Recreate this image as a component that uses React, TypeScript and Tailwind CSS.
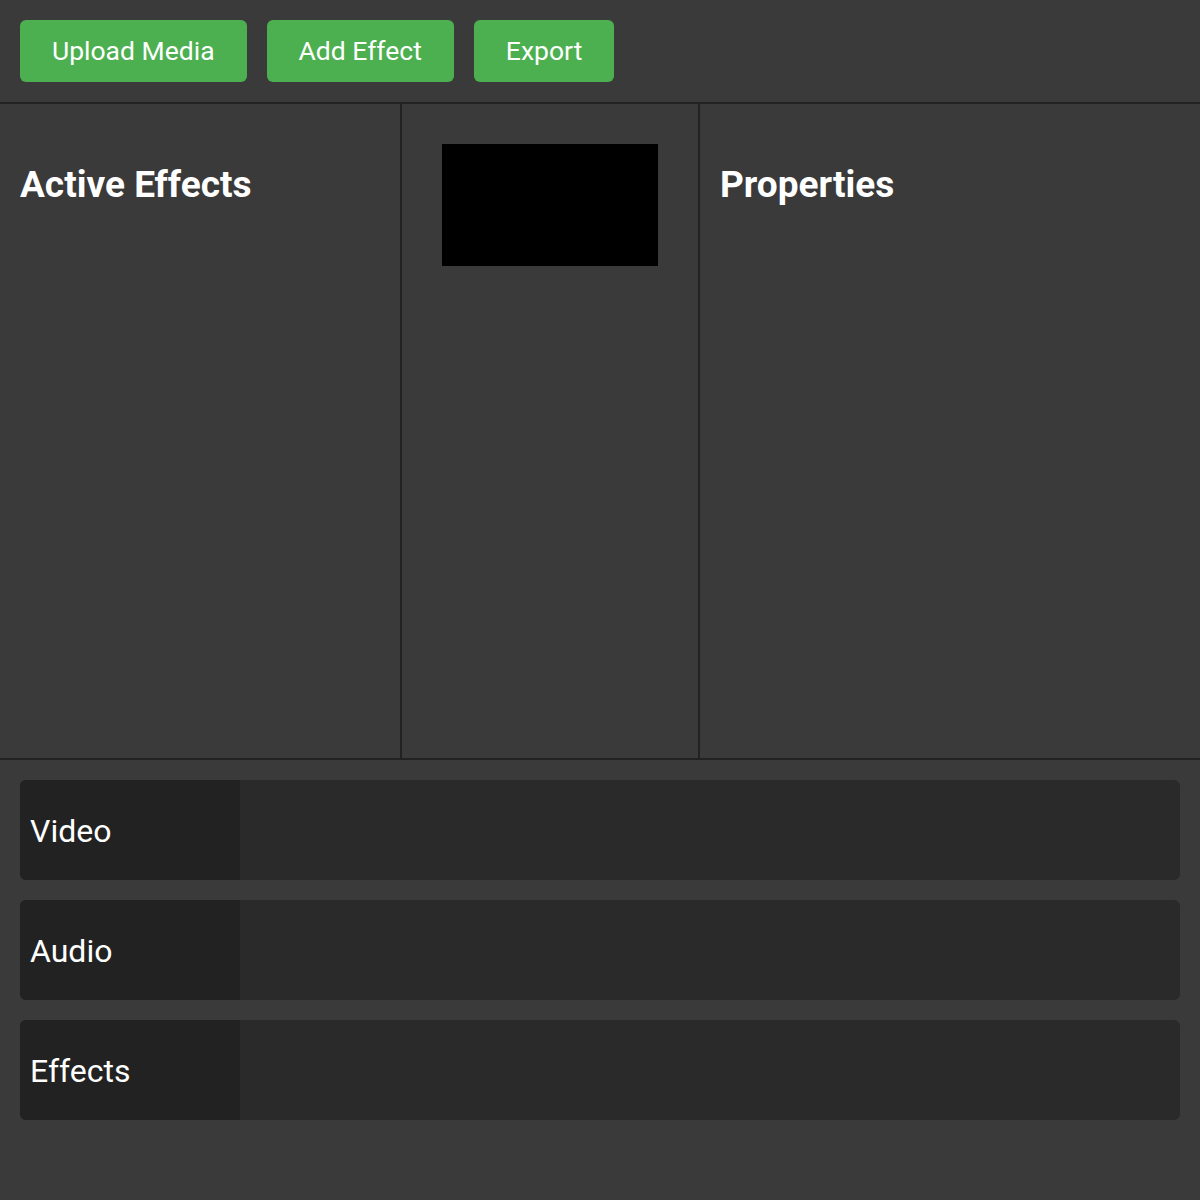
const tracks = ["Video", "Audio", "Effects"];

function ToolButton({ label }: { label: string }) {
  return (
    <button className="h-[62px] rounded-md bg-[#4caf50] px-8 text-[26.5px] text-white">
      {label}
    </button>
  );
}

export default function App() {
  return (
    <div
      className="flex h-[1200px] w-[1200px] flex-col bg-[#3a3a3a] text-white"
      style={{ fontFamily: "Roboto, 'Liberation Sans', sans-serif" }}
    >
      <div className="flex gap-5 border-b-2 border-[#222] p-5">
        <ToolButton label="Upload Media" />
        <ToolButton label="Add Effect" />
        <ToolButton label="Export" />
      </div>

      <div className="flex h-[656px] border-b-2 border-[#222]">
        <div className="w-[402px] border-r-2 border-[#222] p-5">
          <h2 className="mt-[33px] text-[37px] font-bold">Active Effects</h2>
        </div>
        <div className="flex-1 p-5">
          <div className="m-5 h-[122px] w-[216px] bg-black" />
        </div>
        <div className="w-[502px] border-l-2 border-[#222] p-5">
          <h2 className="mt-[33px] text-[37px] font-bold">Properties</h2>
        </div>
      </div>

      <div className="flex flex-col gap-5 p-5">
        {tracks.map((t) => (
          <div key={t} className="flex h-[100px] overflow-hidden rounded-md bg-[#2a2a2a]">
            <div className="flex w-[220px] items-center bg-[#222] px-[10px] pt-[2px] text-[32px]">
              {t}
            </div>
            <div className="flex-1" />
          </div>
        ))}
      </div>
    </div>
  );
}
